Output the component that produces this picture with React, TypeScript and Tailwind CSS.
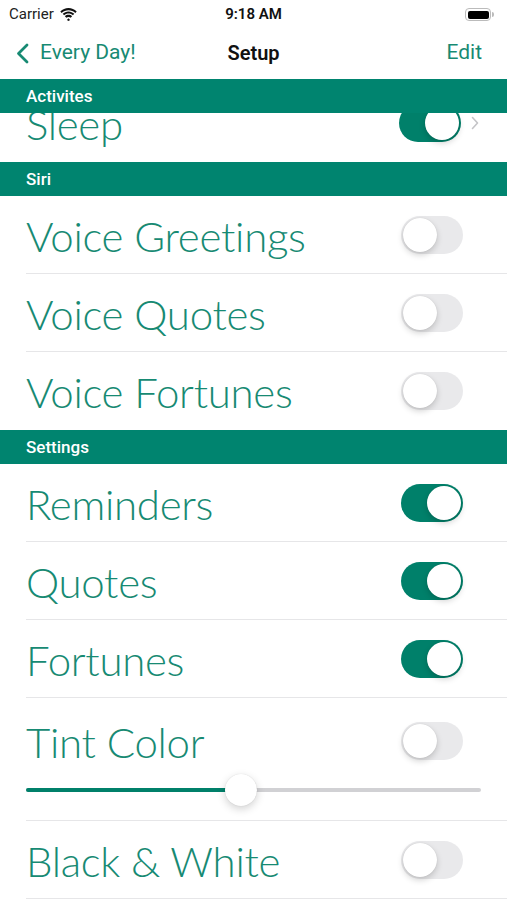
import React from 'react';

const TEAL = 'bg-[#00846f]';
const BIG = "text-[42px] font-light text-[#178a73] leading-none tracking-[-0.3px] font-['Lato','Inter',sans-serif] translate-y-[1px]";

function Toggle({ on }: { on: boolean }) {
  return (
    <div
      className={`relative w-[62px] h-[38px] rounded-full ${on ? 'bg-[#00806a]' : 'bg-[#e9e9eb]'}`}
    >
      <div
        className={`absolute top-[2px] w-[34px] h-[34px] rounded-full bg-white shadow-[0_3px_6px_rgba(0,0,0,0.18),0_0_1px_rgba(0,0,0,0.15)] ${
          on ? 'left-[26px]' : 'left-[2px]'
        }`}
      />
    </div>
  );
}

function SectionHeader({ title }: { title: string }) {
  return (
    <div className={`${TEAL} h-[34px] flex items-center pl-[26px]`}>
      <span className="text-white text-[17px] font-medium leading-none">{title}</span>
    </div>
  );
}

function Row({ label, on, last }: { label: string; on: boolean; last?: boolean }) {
  return (
    <div className="pl-[26px]">
      <div
        className={`h-[78px] flex items-center justify-between pr-[44px] ${
          last ? '' : 'border-b border-[#e6e6e8]'
        }`}
      >
        <span className={BIG}>{label}</span>
        <Toggle on={on} />
      </div>
    </div>
  );
}

function StatusBar() {
  return (
    <div className="h-[29px] flex items-center justify-between px-[9px] relative">
      <div className="flex items-center gap-[6px]">
        <span className="text-[15px] text-[#222]">Carrier</span>
        <svg width="17" height="13" viewBox="0 0 17 13">
          <path d="M8.5 2.2c2.6 0 5 1 6.8 2.7l1.4-1.5C14.5 1.3 11.6 0 8.5 0S2.5 1.3.3 3.4l1.4 1.5C3.5 3.2 5.9 2.2 8.5 2.2z" fill="#111" />
          <path d="M8.5 5.6c1.7 0 3.2.6 4.4 1.7l1.4-1.5C12.8 4.3 10.7 3.4 8.5 3.4S4.2 4.3 2.7 5.8l1.4 1.5c1.2-1.1 2.7-1.7 4.4-1.7z" fill="#111" />
          <path d="M8.5 8.9c.9 0 1.6.3 2.2.8l1.4-1.5C11.1 7.3 9.9 6.8 8.5 6.8s-2.6.5-3.6 1.4l1.4 1.5c.6-.5 1.3-.8 2.2-.8z" fill="#111" />
          <path d="M8.5 10.2l1.6 1.7-1.6 1.1-1.6-1.1z" fill="#111" />
        </svg>
      </div>
      <span className="absolute left-1/2 -translate-x-1/2 text-[15px] font-semibold text-[#111]">
        9:18 AM
      </span>
      <div className="flex items-center mr-[4px]">
        <div className="w-[26px] h-[13px] rounded-[4px] border border-[#bbb] p-[1.5px]">
          <div className="w-full h-full rounded-[2px] bg-black" />
        </div>
        <div className="w-[2px] h-[5px] rounded-r-sm bg-[#bbb] ml-[1px]" />
      </div>
    </div>
  );
}

function NavBar() {
  return (
    <div className="h-[50px] flex items-center justify-between relative pl-[16px] pr-[25px] -translate-y-[1px]">
      <div className="flex items-center gap-[11px] text-[#178a73]">
        <svg width="13" height="21" viewBox="0 0 13 21">
          <path d="M11 2L2.5 10.5 11 19" stroke="#178a73" strokeWidth="2.8" fill="none" strokeLinecap="round" strokeLinejoin="round" />
        </svg>
        <span className="text-[21px]">Every Day!</span>
      </div>
      <span className="absolute left-1/2 -translate-x-1/2 text-[20px] font-semibold text-[#111]">
        Setup
      </span>
      <span className="text-[21px] text-[#178a73]">Edit</span>
    </div>
  );
}

export default function App() {
  return (
    <div className="w-[507px] h-[900px] bg-white overflow-hidden font-['Roboto','Inter',sans-serif]">
      <StatusBar />
      <NavBar />
      <SectionHeader title="Activites" />
      <div className="h-[49px] overflow-hidden pl-[26px]">
        <div className="h-[78px] -mt-[29px] flex items-center justify-between pr-[28px]">
          <span className={BIG}>Sleep</span>
          <div className="flex items-center gap-[10px]">
            <Toggle on={true} />
            <svg width="8" height="14" viewBox="0 0 8 14">
              <path d="M1.5 1.5L6.5 7l-5 5.5" stroke="#c4c4c7" strokeWidth="1.6" fill="none" strokeLinecap="round" strokeLinejoin="round" />
            </svg>
          </div>
        </div>
      </div>
      <SectionHeader title="Siri" />
      <Row label="Voice Greetings" on={false} />
      <Row label="Voice Quotes" on={false} />
      <Row label="Voice Fortunes" on={false} last />
      <SectionHeader title="Settings" />
      <Row label="Reminders" on={true} />
      <Row label="Quotes" on={true} />
      <Row label="Fortunes" on={true} />
      <div className="pl-[26px]">
        <div className="border-b border-[#e6e6e8] pb-[24px]">
          <div className="h-[86px] flex items-center justify-between pr-[44px]">
            <span className={BIG}>Tint Color</span>
            <Toggle on={false} />
          </div>
          <div className="h-[12px] flex items-center pr-[26px]">
            <div className="relative w-full h-[4px] rounded-full bg-[#d1d1d4]">
              <div className="absolute left-0 top-0 h-full w-[215px] rounded-full bg-[#00806a]" />
              <div className="absolute left-[199px] top-1/2 -translate-y-1/2 w-[32px] h-[32px] rounded-full bg-white shadow-[0_3px_8px_rgba(0,0,0,0.18),0_0_1px_rgba(0,0,0,0.15)]" />
            </div>
          </div>
        </div>
      </div>
      <Row label="Black & White" on={false} />
    </div>
  );
}
